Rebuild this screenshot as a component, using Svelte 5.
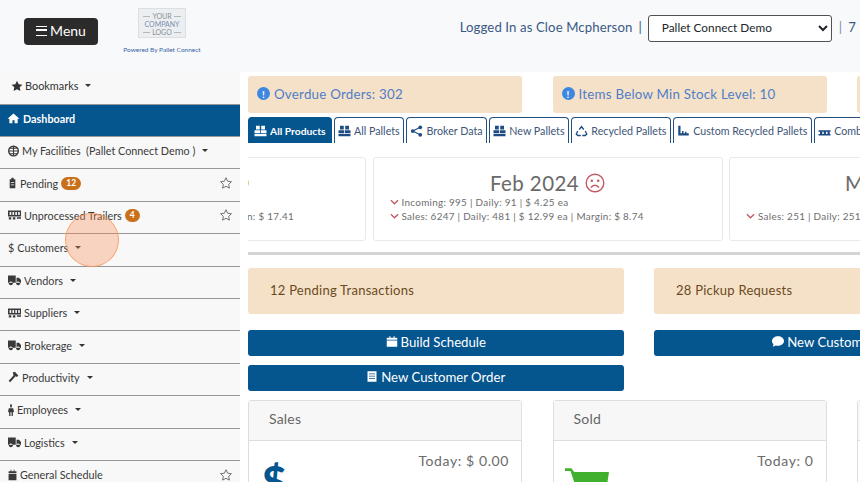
<script>
  const icons = {
    star: "M8 1l2.200 4.600 5 .7-3.600 3.500.9 5L8 12.400l-4.500 2.400.9-5L.8 6.300l5-.7z",
    home: "M8 2L0 9h2.500v6h4v-4h3v4h4V9H16z",
    clip: "M6 1h4v2h3v12H3V3h3zM5 7v1h6V7zM5 10v1h6v-1z",
    truck: "M0 2h9.500v9.500H0zM10.500 5h3l2.500 3v3.500h-5.500zM3.500 10a2.500 2.500 0 1 0 .01 0M12.500 10a2.500 2.500 0 1 0 .01 0",
    hammer: "M7 2l3-1 5 5-2 2-2-1-8 8-2-2 7-7z",
    person: "M8 0a2.500 2.500 0 1 1-.01 0M2 5.500h12l2 5-3 .5V16H9.500v-5h-3v5H3v-5l-3-.5z",
    cal: "M1 3h3.500V1H6v2h4V1h1.500v2H15v2.500H1zM1 6.500h14V15H1z",
    trailer: "M0 2h16v8H0zM2 4v4h2V4zM5.500 4v4h2V4zM9 4v4h2V4zM12.500 4v4h2V4zM1 11h3v3H1zM6 11h3v3H6zM11 11h5v2h-5z",
    pallet: "M2 1h5v5H2zM9 1h5v5H9zM0 7h7.500v4H0zM8.500 7H16v4H8.500zM0 12h16v3H0z",
    doc: "M2 1h12v14H2zM4 4v1h8V4zM4 7v1h8V7zM4 10v1h8v-1z"
  };
  const side = [
    { t: "My Facilities  (Pallet Connect Demo )", i: "globe", w: 11, caret: true },
    { t: "Pending", i: "clip", w: 9, badge: "12", fav: true },
    { t: "Unprocessed Trailers", i: "trailer", w: 13, badge: "4", fav: true },
    { t: "Customers", i: "dollar", caret: true },
    { t: "Vendors", i: "truck", w: 13, caret: true },
    { t: "Suppliers", i: "trailer", w: 13, caret: true },
    { t: "Brokerage", i: "truck", w: 13, caret: true },
    { t: "Productivity", i: "hammer", w: 11, caret: true },
    { t: "Employees", i: "person", w: 6, caret: true },
    { t: "Logistics", i: "truck", w: 13, caret: true },
    { t: "General Schedule", i: "cal", w: 9, fav: true }
  ];
  const tabs = ["All Pallets", "Broker Data", "New Pallets", "Recycled Pallets", "Custom Recycled Pallets", "Combo"];
</script>

<div class="page">
  <header class="top">
    <div class="brand">
      <button class="menu"><span class="bars"></span>Menu</button>
      <div class="logo">
        <div class="logobox"><span class="dash">YOUR</span><b>COMPANY</b><span class="dash">LOGO</span></div>
        <small>Powered By Pallet Connect</small>
      </div>
    </div>
    <div class="user">
      <span>Logged In as Cloe Mcpherson</span><i>|</i>
      <select><option>Pallet Connect Demo</option></select>
      <i class="sep">|</i><span>7</span>
    </div>
  </header>

  <div class="body">
    <aside>
      <div class="bookmarks">
        <svg viewBox="0 0 16 16"><path d={icons.star}/></svg>Bookmarks<span class="caret"></span>
      </div>
      <div class="row active"><svg viewBox="0 0 16 16"><path d={icons.home}/></svg>Dashboard</div>
      {#each side as s}
        <div class="row">
          {#if s.i === "globe"}
            <svg style="width:{s.w}px" viewBox="0 0 16 16"><circle cx="8" cy="8" r="7" fill="none" stroke="currentColor" stroke-width="2"/><path d="M1 8h14M8 1v14M3 4h10M3 12h10" stroke="currentColor" stroke-width="1.500" fill="none"/></svg>
          {:else if s.i === "dollar"}
            <span class="dollar">$</span>
          {:else}
            <svg style="width:{s.w}px" viewBox="0 0 16 16" preserveAspectRatio="none"><path d={icons[s.i]}/></svg>
          {/if}
          <span>{s.t}</span>
          {#if s.badge}<em>{s.badge}</em>{/if}
          {#if s.caret}<span class="caret"></span>{/if}
          {#if s.fav}
            <svg class="fav" viewBox="0 0 16 16"><path d={icons.star} fill="none" stroke="#555" stroke-width="1.100"/></svg>
          {/if}
        </div>
      {/each}
      <div class="pointer"></div>
    </aside>

    <main>
      <div class="cols">
        <div class="alert"><span class="dot">!</span>Overdue Orders: 302</div>
        <div class="alert"><span class="dot">!</span>Items Below Min Stock Level: 10</div>
        <div class="alert"></div>
      </div>

      <nav class="tabs">
        <div class="tab on"><svg viewBox="0 0 16 16"><path d={icons.pallet}/></svg>All Products</div>
        {#each tabs as t}
          <div class="tab">
            {#if t === "Broker Data"}
              <svg viewBox="0 0 16 16"><circle cx="3" cy="8" r="2.500"/><circle cx="13" cy="3" r="2.500"/><circle cx="13" cy="13" r="2.500"/><path d="M3 8l10-5M3 8l10 5" stroke="currentColor" stroke-width="1.500"/></svg>
            {:else if t === "Recycled Pallets"}
              <svg viewBox="0 0 16 16"><path fill="none" stroke="currentColor" stroke-width="1.800" d="M5 6l3-4 3 4M13 8l2 4-2 2H9M3 8l-2 4 2 2h4"/></svg>
            {:else if t === "Custom Recycled Pallets"}
              <svg viewBox="0 0 16 16"><path d="M1 1h3v10h2V8h2v3h2V9h2v2h3v3H1z"/></svg>
            {:else if t === "Combo"}
              <svg viewBox="0 0 16 16"><path d="M0 7h16v2H0zM0 12h16v2H0zM2 9h3v3H2zM7 9h3v3H7zM12 9h3v3h-3z"/></svg>
            {:else}
              <svg viewBox="0 0 16 16"><path d={icons.pallet}/></svg>
            {/if}
            {t}
          </div>
        {/each}
      </nav>

      <div class="viewport">
        <div class="carousel">
          <div class="card first">
            <h3>Jan 2024 <svg class="face" viewBox="0 0 20 20"><circle cx="10" cy="10" r="8.800" fill="none" stroke="#4ab52f" stroke-width="1.400"/></svg></h3>
            <p>Sales: 6100 | Daily: 470 | $ 12.99 ea | Margin: $ 17.41</p>
          </div>
          <div class="card">
            <h3>Feb 2024
              <svg class="face" viewBox="0 0 20 20"><g fill="none" stroke="#c25a63" stroke-width="1.400"><circle cx="10" cy="10" r="8.800"/><path d="M6 14.500c2-3 6-3 8 0"/><circle cx="6.800" cy="7.800" r=".6"/><circle cx="13.200" cy="7.800" r=".6"/></g></svg>
            </h3>
            <p><svg class="chev" viewBox="0 0 10 6"><path d="M1 1l4 4 4-4"/></svg>Incoming: 995 | Daily: 91 | $ 4.25 ea</p>
            <p><svg class="chev" viewBox="0 0 10 6"><path d="M1 1l4 4 4-4"/></svg>Sales: 6247 | Daily: 481 | $ 12.99 ea | Margin: $ 8.74</p>
          </div>
          <div class="card">
            <h3>Mar 2024
              <svg class="face" viewBox="0 0 20 20"><circle cx="10" cy="10" r="8.800" fill="none" stroke="#c25a63" stroke-width="1.400"/></svg>
            </h3>
            <p>&nbsp;</p>
            <p><svg class="chev" viewBox="0 0 10 6"><path d="M1 1l4 4 4-4"/></svg>Sales: 251 | Daily: 251 | $ 12.99 ea</p>
          </div>
        </div>
      </div>

      <hr />

      <div class="pair">
        <div class="note">12 Pending Transactions</div>
        <div class="note">28 Pickup Requests</div>
      </div>

      <div class="pair btns">
        <div class="stack">
          <button class="cta"><svg viewBox="0 0 16 16"><path d={icons.cal}/></svg>Build Schedule</button>
          <button class="cta"><svg viewBox="0 0 16 16"><path d={icons.doc}/></svg>New Customer Order</button>
        </div>
        <div class="stack">
          <button class="cta"><svg viewBox="0 0 16 16"><path d="M8 1c4.400 0 8 2.800 8 6.300s-3.600 6.300-8 6.300c-1 0-2-.1-2.800-.4L1 15l1-3.300C.8 10.600 0 9 0 7.300 0 3.800 3.600 1 8 1z"/></svg>New Customer Order</button>
        </div>
      </div>

      <div class="cols panels">
        <section>
          <h4>Sales</h4>
          <div class="pbody">
            <span class="big">$</span>
            <span class="today">Today: $ 0.00</span>
          </div>
        </section>
        <section>
          <h4>Sold</h4>
          <div class="pbody">
            <svg class="cart" viewBox="0 0 48 30"><path d="M0 0h7l3 4h38l-3 20H13L6 3H0z"/></svg>
            <span class="today">Today: 0</span>
          </div>
        </section>
        <section><h4>&nbsp;</h4><div class="pbody"></div></section>
      </div>
    </main>
  </div>
</div>

<style>
  :global(body) { margin: 0; }
  .page {
    width: 860px; height: 482px; overflow: hidden; background: #f8f9fa;
    font-family: "Lato", "Open Sans", sans-serif; color: #212529;
    display: flex; flex-direction: column;
  }
  svg { fill: currentColor; flex: none; }

  .top { height: 72px; flex: none; display: flex; justify-content: space-between; }
  .brand { display: flex; align-items: flex-start; }
  .menu {
    margin: 18px 0 0 24px; width: 74px; height: 27px; border: 0; border-radius: 4px;
    background: #2b2b2b; color: #fff; font: 14px "Lato", sans-serif;
    display: flex; align-items: center; justify-content: center; gap: 3px; padding: 0 0 2px;
  }
  .bars { width: 11px; height: 10px; box-sizing: border-box; border-top: 1.500px solid #fff; border-bottom: 1.500px solid #fff; position: relative; }
  .bars::after { content: ""; position: absolute; left: 0; right: 0; top: 2.800px; height: 1.500px; background: #fff; }
  .logo { margin: 8px 0 0 24px; width: 80px; display: flex; flex-direction: column; align-items: center; }
  .logobox {
    width: 48px; height: 30px; background: #eceff1; border: 1px solid #dcdfe2;
    display: flex; flex-direction: column; align-items: center;
    font-size: 7px; line-height: 8px; color: #8a8f94; padding-top: 3px; box-sizing: border-box;
  }
  .dash { display: flex; align-items: center; gap: 2px; }
  .dash::before, .dash::after { content: ""; width: 7px; height: 1px; background: #b5b8bb; }
  .logobox b { font-weight: 400; color: #7c8fb0; }
  small { font-size: 6.500px; color: #3a64a8; margin-top: 8px; white-space: nowrap; }
  .user {
    display: flex; align-items: center; align-self: flex-start; margin-top: 15px; height: 27px;
    color: #3b5a85; font-size: 13.200px; white-space: nowrap; padding-right: 4px; letter-spacing: .1px;
  }
  .user span, .user i { padding-bottom: 3px; }
  .user i { font-style: normal; margin: 0 6px; }
  .user .sep { margin: 0 6px 0 7px; color: #7d8ea8; }
  select {
    width: 184px; height: 27px; background: #fff; border: 1px solid #4d5257; border-radius: 3px;
    font: 11.800px "Lato", sans-serif; color: #212529; padding: 0 0 2px 9px;
  }

  .body { flex: 1; display: flex; min-height: 0; }
  aside { width: 240px; flex: none; position: relative; background: #f8f8f8; }
  .bookmarks { height: 31.600px; display: flex; align-items: center; padding: 0 0 4px 11px; font-size: 10.900px; color: #333; box-sizing: border-box; }
  .bookmarks svg { width: 12px; height: 12px; margin-right: 2px; }
  .row {
    height: 32.400px; box-sizing: border-box; border-top: 1.400px solid #979797; display: flex; align-items: center;
    padding: 0 8px 4px 8px; font-size: 10.800px; color: #3a3a3a; gap: 3px; white-space: pre;
  }
  .row svg { height: 12px; }
  .row.active { background: #05558f; color: #fff; font-weight: 700; gap: 3px; padding-left: 7px; }
  .row.active svg { width: 13px; height: 12px; }
  .row em {
    font-style: normal; background: #c9701a; color: #fff; font-size: 8.500px; font-weight: 700;
    border-radius: 8px; padding: 1.500px 5px; line-height: 10px; margin-left: 0;
  }
  .row .fav { margin-left: auto; width: 12px; height: 12px; }
  .caret {
    display: inline-block; margin-left: 7px; border-top: 3.500px solid #333;
    border-left: 3px solid transparent; border-right: 3px solid transparent;
  }
  .row .caret { margin-left: 4px; }
  .pointer {
    position: absolute; left: 65px; top: 141px; width: 54px; height: 54px; box-sizing: border-box; border-radius: 50%;
    background: rgba(250, 140, 80, .33); border: 1.500px solid rgba(245, 150, 90, .75);
  }

  main { flex: 1; min-width: 0; background: #fff; padding: 4px 0 0 8px; overflow: hidden; }
  .cols { display: flex; gap: 30.500px; width: 900px; }
  .alert {
    flex: none; width: 274px; height: 37px; background: #f5e1c8; border-radius: 3px;
    display: flex; align-items: center; padding: 0 0 2px 9px; box-sizing: border-box;
    color: #4f7ec9; font-size: 13.300px; letter-spacing: .25px; white-space: nowrap;
  }
  .dot {
    width: 13px; height: 13px; border-radius: 50%; background: #3d87e0; color: #fff; font-size: 10px; font-weight: 700;
    display: inline-flex; align-items: center; justify-content: center; margin-right: 4px; letter-spacing: 0;
  }
  .tabs { display: flex; gap: 2px; margin-top: 4px; height: 27px; white-space: nowrap; }
  .tab {
    display: flex; align-items: center; gap: 3px; padding: 0 3.400px; box-sizing: border-box; height: 26px;
    border: 1.400px solid #24507f; border-bottom: 0; border-radius: 4px 4px 0 0; font-size: 10.700px; color: #3d5678; background: #fff;
  }
  .tab svg { width: 13px; height: 12px; color: #1d4c82; }
  .tab.on { background: #05558f; color: #fff; font-weight: 700; border-color: #05558f; padding: 0 5px; font-size: 10.300px; }
  .tab.on svg { color: #fff; }

  .viewport { overflow: hidden; margin-top: 13px; }
  .carousel { display: flex; gap: 6.500px; margin-left: -232px; width: 1200px; }
  .card {
    flex: none; width: 350px; height: 84px; box-sizing: border-box; border: 1px solid #e9e9e9; border-radius: 3px;
    padding: 13px 16px; color: #6d6d6d; font-size: 9.900px; letter-spacing: .3px; white-space: nowrap;
    background: #fff;
  }
  .card h3 {
    margin: 0; font-weight: 400; font-size: 20.500px; line-height: 24px; color: #6a6a6a; text-align: center;
    display: flex; justify-content: center; align-items: center; gap: 6px; height: 24px; letter-spacing: .4px;
  }
  .face { width: 20px; height: 20px; }
  .card p { margin: 0; line-height: 14px; display: flex; align-items: center; gap: 3px; }
  .card.first h3 { padding-left: 4px; }
  .card.first p { justify-content: flex-end; margin-top: 14px; padding-right: 55px; }
  .chev { width: 9px; height: 6px; fill: none; stroke: #c25a63; stroke-width: 1.500; }

  hr { border: 0; height: 2.500px; background: #d5d5d5; margin: 11px 0 13px; width: 620px; }

  .pair { display: flex; gap: 30.500px; width: 900px; }
  .note {
    flex: none; width: 375.500px; height: 46px; background: #f5e1c8; border-radius: 3px; color: #6a4a22;
    display: flex; align-items: center; padding: 0 0 2px 22px; box-sizing: border-box; font-size: 13px; letter-spacing: .25px;
  }
  .btns { margin-top: 16px; }
  .stack { flex: none; width: 375.500px; display: flex; flex-direction: column; gap: 9px; }
  .cta {
    height: 26px; border: 0; border-radius: 3px; background: #05558f; color: #fff; padding: 0 0 2px;
    font: 13.200px "Lato", sans-serif; display: flex; align-items: center; justify-content: center; gap: 3px;
  }
  .cta svg { width: 12px; height: 13px; }

  .panels { margin-top: 9px; }
  section { flex: none; width: 274px; height: 120px; box-sizing: border-box; border: 1px solid #dedede; border-radius: 3px; background: #fff; }
  h4 {
    margin: 0; height: 40px; background: #f7f7f7; border-bottom: 1px solid #dedede; box-sizing: border-box;
    font-weight: 400; font-size: 14px; color: #666; line-height: 35px; padding-left: 20px; letter-spacing: .2px;
  }
  .pbody { position: relative; height: 60px; }
  .today { position: absolute; right: 12px; top: 11px; font-size: 14px; color: #6b6b6b; letter-spacing: .6px; }
  .big { position: absolute; left: 13px; top: 15px; font-size: 42px; line-height: 50px; font-weight: 900; color: #05558f; }
  .cart { position: absolute; left: 11px; top: 27px; width: 44px; height: 28px; color: #42b02f; }
</style>
